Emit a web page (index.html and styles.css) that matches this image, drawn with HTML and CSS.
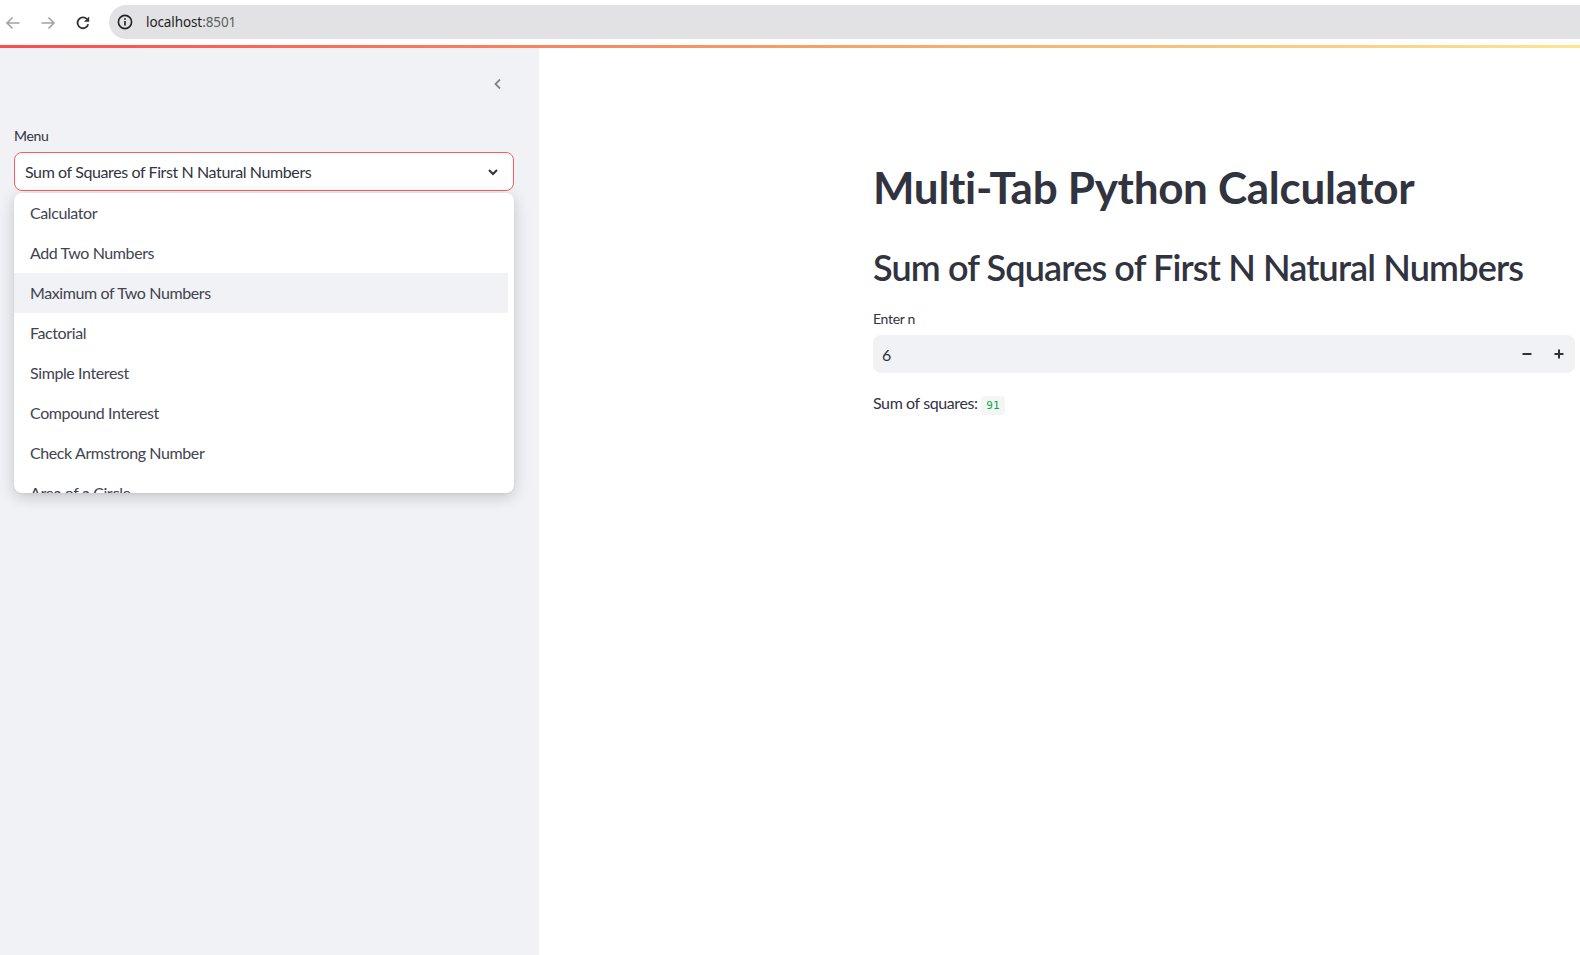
FILE: index.html
```html
<!DOCTYPE html>
<html lang="en">
<head>
<meta charset="utf-8">
<title>Multi-Tab Python Calculator</title>
<link rel="stylesheet" href="styles.css">
</head>
<body>
<header class="chrome">
  <div class="nav">
    <svg class="nav-icon" width="16" height="16" viewBox="0 0 16 16"><path d="M14.5 8H2M7.5 2.5L2 8l5.5 5.5" fill="none" stroke="#a3a3a3" stroke-width="1.6"/></svg>
    <svg class="nav-icon" width="16" height="16" viewBox="0 0 16 16"><path d="M1.5 8H14M8.5 2.5L14 8l-5.5 5.5" fill="none" stroke="#a3a3a3" stroke-width="1.6"/></svg>
    <svg class="nav-icon" width="16" height="16" viewBox="0 0 16 16"><path d="M13.2 9.2A5.4 5.4 0 1 1 11.9 4.1" fill="none" stroke="#333" stroke-width="1.8"/><path d="M14.2 1.6v5.2H9z" fill="#333"/></svg>
  </div>
  <div class="omnibox">
    <svg class="info-icon" width="16" height="16" viewBox="0 0 16 16"><circle cx="8" cy="8" r="6.6" fill="none" stroke="#222" stroke-width="1.6"/><rect x="7.2" y="7" width="1.6" height="4.6" fill="#222"/><rect x="7.2" y="4.2" width="1.6" height="1.6" fill="#222"/></svg>
    <span class="url">localhost<span class="port">:8501</span></span>
  </div>
</header>
<div class="decoration"></div>
<div class="app">
  <aside class="sidebar">
    <div class="sidebar-top">
      <svg width="16" height="16" viewBox="0 0 16 16"><path d="M10 3.5L5.5 8l4.5 4.5" fill="none" stroke="#808495" stroke-width="1.8"/></svg>
    </div>
    <div class="field">
      <label class="label">Menu</label>
      <div class="select">
        <span>Sum of Squares of First N Natural Numbers</span>
        <svg width="14" height="14" viewBox="0 0 14 14"><path d="M3 5l4 4 4-4" fill="none" stroke="#31333f" stroke-width="2"/></svg>
      </div>
      <ul class="dropdown">
        <li class="option">Calculator</li>
        <li class="option">Add Two Numbers</li>
        <li class="option active">Maximum of Two Numbers</li>
        <li class="option">Factorial</li>
        <li class="option">Simple Interest</li>
        <li class="option">Compound Interest</li>
        <li class="option">Check Armstrong Number</li>
        <li class="option">Area of a Circle</li>
      </ul>
    </div>
  </aside>
  <main class="main">
    <div class="block">
      <h1 class="title">Multi-Tab Python Calculator</h1>
      <h2 class="subtitle">Sum of Squares of First N Natural Numbers</h2>
      <label class="label">Enter n</label>
      <div class="number-input">
        <span class="value">6</span>
        <div class="steps">
          <span class="step"><svg width="10" height="10" viewBox="0 0 10 10"><rect x="0.5" y="4" width="9" height="2" fill="#31333f"/></svg></span>
          <span class="step"><svg width="10" height="10" viewBox="0 0 10 10"><rect x="0.5" y="4" width="9" height="2" fill="#31333f"/><rect x="4" y="0.5" width="2" height="9" fill="#31333f"/></svg></span>
        </div>
      </div>
      <p class="result">Sum of squares: <code class="code">91</code></p>
    </div>
  </main>
</div>
</body>
</html>
```
FILE: styles.css
```css
html, body {
  margin: 0;
  padding: 0;
  width: 1580px;
  height: 955px;
  overflow: hidden;
  background: #ffffff;
}
body {
  font-family: Lato, "Open Sans", sans-serif;
  color: #31333f;
  letter-spacing: -0.4px;
}
.chrome {
  height: 45px;
  display: flex;
  align-items: center;
  background: #ffffff;
  letter-spacing: normal;
}
.nav {
  display: flex;
  align-items: center;
  gap: 19px;
  padding-left: 5px;
}
.nav-icon { display: block; }
.omnibox {
  margin-left: 18px;
  margin-top: -2px;
  flex: 1;
  height: 34px;
  background: #e2e2e4;
  border-radius: 17px 0 0 17px;
  display: flex;
  align-items: center;
  padding-left: 8px;
}
.info-icon { display: block; margin-right: 13px; }
.url {
  font-family: "Noto Sans", "Open Sans", sans-serif;
  font-size: 13.5px;
  color: #1f1f1f;
  letter-spacing: -0.1px;
}
.port { color: #5f5f5f; }
.decoration {
  height: 3px;
  background: linear-gradient(90deg, #ff4b4b 0px, #f6a96a 900px, #fde58e 1580px);
}
.app {
  display: flex;
  height: 907px;
}
.sidebar {
  width: 539px;
  flex: none;
  background: #f0f2f6;
  padding: 0 25px 0 14px;
  box-sizing: border-box;
}
.sidebar-top {
  height: 72px;
  display: flex;
  justify-content: flex-end;
  align-items: center;
  padding-right: 8px;
}
.field {
  position: relative;
  padding-top: 5px;
}
.label {
  display: block;
  font-size: 14px;
  line-height: 21px;
  margin: 0 0 6px;
  letter-spacing: -0.3px;
}
.select {
  height: 39px;
  box-sizing: border-box;
  border: 1px solid #ff5a5a;
  border-radius: 8px;
  background: #ffffff;
  display: flex;
  align-items: center;
  justify-content: space-between;
  padding: 0 13px 0 10px;
  font-size: 16px;
}
.select svg { display: block; }
.dropdown {
  position: absolute;
  left: 0;
  right: 0;
  top: calc(100% + 2px);
  height: 300px;
  overflow: hidden;
  margin: 0;
  padding: 0 6px 0 0;
  list-style: none;
  background: #ffffff;
  border-radius: 8px;
  box-shadow: 0 4px 16px rgba(0, 0, 0, 0.18), 0 1px 3px rgba(0, 0, 0, 0.06);
  z-index: 5;
}
.option {
  height: 40px;
  line-height: 40px;
  padding-left: 16px;
  font-size: 16px;
  color: #41434f;
}
.option.active { background: #f0f2f6; }
.main {
  flex: 1;
  padding: 113px 0 0 334px;
  box-sizing: border-box;
}
.block { width: 702px; }
.title {
  margin: 0;
  font-size: 44px;
  line-height: 53px;
  font-weight: 700;
  letter-spacing: -0.3px;
}
.subtitle {
  margin: 32px 0 0;
  font-size: 36px;
  line-height: 43px;
  font-weight: 600;
  letter-spacing: -0.85px;
}
.main .label { margin: 19px 0 6px; }
.number-input {
  height: 38px;
  background: #f0f2f6;
  border-radius: 8px;
  display: flex;
  align-items: center;
  justify-content: space-between;
  padding-left: 9px;
}
.value { font-size: 16px; }
.steps { display: flex; }
.step {
  width: 32px;
  height: 38px;
  display: flex;
  align-items: center;
  justify-content: center;
}
.result {
  margin: 18px 0 0;
  font-size: 16px;
  line-height: 24px;
}
.code {
  font-family: "DejaVu Sans Mono", "Liberation Mono", monospace;
  font-size: 11px;
  letter-spacing: normal;
  color: #09ab3b;
  background: #f4f5f7;
  border-radius: 4px;
  padding: 3px 5px;
  margin-left: 0;
}
```
